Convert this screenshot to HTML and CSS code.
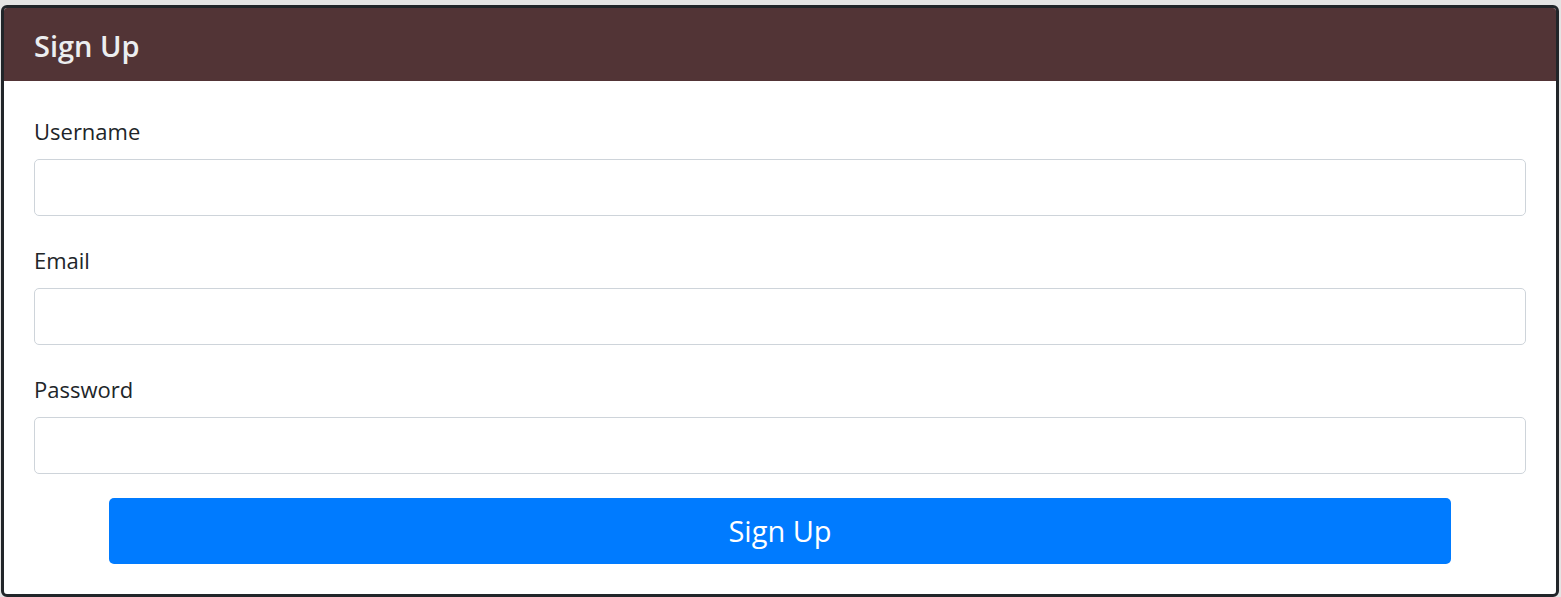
FILE: index.html
```html
<!DOCTYPE html>
<html lang="en">
<head>
<meta charset="utf-8">
<title>Sign Up</title>
<link rel="stylesheet" href="styles.css">
</head>
<body>
<div class="card">
  <div class="card-header">
    <h3 class="card-title">Sign Up</h3>
  </div>
  <form class="card-body">
    <div class="form-group">
      <label class="form-label" for="username">Username</label>
      <input class="form-control" type="text" id="username">
    </div>
    <div class="form-group">
      <label class="form-label" for="email">Email</label>
      <input class="form-control" type="email" id="email">
    </div>
    <div class="form-group last">
      <label class="form-label" for="password">Password</label>
      <input class="form-control" type="password" id="password">
    </div>
    <button class="btn-primary" type="submit">Sign Up</button>
  </form>
</div>
</body>
</html>
```
FILE: styles.css
```css
* { box-sizing: border-box; }
html, body { margin: 0; padding: 0; }
body {
  background: #e4e4e4;
  padding: 5px 2px 0 1px;
  font-family: "Open Sans", "Noto Sans", sans-serif;
  color: #212529;
  height: 597px;
  overflow: hidden;
}
.card {
  border: 3px solid #212529;
  border-radius: 6px;
  background: #fff;
  height: 592px;
  display: flex;
  flex-direction: column;
  overflow: hidden;
}
.card-header {
  background: #523436;
  height: 73px;
  padding: 0 30px;
  display: flex;
  align-items: center;
}
.card-title {
  margin: 0;
  font-size: 29px;
  font-weight: 600;
  color: #eceef0;
  line-height: 1;
  padding-top: 2px;
}
.card-body {
  padding: 35px 30px 0 30px;
  display: flex;
  flex-direction: column;
}
.form-group {
  display: flex;
  flex-direction: column;
  margin-bottom: 29px;
}
.form-group.last { margin-bottom: 24px; }
.form-label {
  font-size: 22px;
  line-height: 30px;
  margin-bottom: 13px;
}
.form-control {
  height: 57px;
  border: 1px solid #ced4da;
  border-radius: 5px;
  background: #fff;
  font: inherit;
  font-size: 22px;
  padding: 0 14px;
}
.btn-primary {
  width: 90%;
  align-self: center;
  height: 66px;
  background: #007bff;
  border: none;
  border-radius: 5px;
  color: #fff;
  font-family: inherit;
  font-size: 29px;
  padding: 0 0 2px 0;
}
```
